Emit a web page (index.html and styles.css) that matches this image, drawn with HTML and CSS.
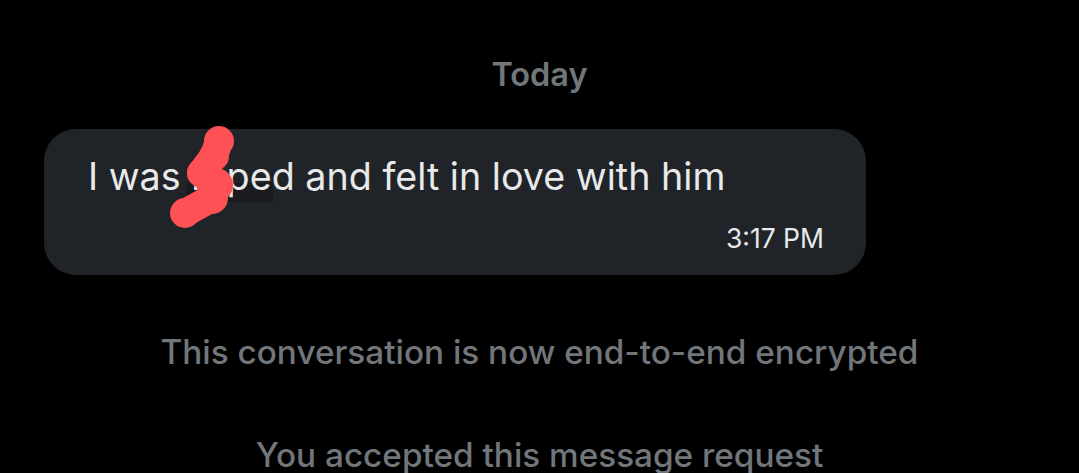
FILE: index.html
```html
<!DOCTYPE html>
<html>
<head>
<meta charset="utf-8">
<link rel="stylesheet" href="styles.css">
</head>
<body>
<main class="chat">
  <div class="day">Today</div>
  <div class="bubble">
    <div class="smudge"></div>
    <p class="msg">I was <span class="hidden">ra</span>ped and felt in love with him</p>
    <div class="time">3:17 PM</div>
    <svg class="scribble" width="80" height="120" viewBox="160 120 80 120">
      <g fill="#fd5155">
        <circle cx="219" cy="141" r="15"/>
        <circle cx="214" cy="156" r="15"/>
        <circle cx="201" cy="173" r="14"/>
        <circle cx="216" cy="185" r="17"/>
        <circle cx="212" cy="198" r="16"/>
        <circle cx="185" cy="213" r="15"/>
        <path d="M219 141 L214 156 L201 173 L216 185 L212 198 L185 213" stroke="#fd5155" stroke-width="28" stroke-linecap="round" stroke-linejoin="round" fill="none"/>
      </g>
    </svg>
  </div>
  <div class="system enc">This conversation is now end-to-end encrypted</div>
  <div class="system accepted">You accepted this message request</div>
</main>
</body>
</html>
```

FILE: styles.css
```css
html, body {
  margin: 0;
  padding: 0;
  background: #000;
  overflow: hidden;
}
body {
  width: 1079px;
  height: 473px;
  font-family: Inter, "Noto Sans", sans-serif;
}
.chat {
  display: flex;
  flex-direction: column;
}
.day {
  margin-top: 55px;
  height: 40px;
  line-height: 40px;
  text-align: center;
  color: #71767b;
  font-size: 32.5px;
  font-weight: 600;
}
.bubble {
  position: relative;
  margin-top: 34px;
  margin-left: 44px;
  width: 822px;
  height: 146px;
  box-sizing: border-box;
  padding: 23px 42px 0 44px;
  background: #202327;
  border-radius: 32px;
}
.msg {
  position: relative;
  margin: 0;
  height: 48px;
  line-height: 48px;
  color: #e7e9ea;
  font-size: 37.7px;
  font-weight: 400;
}
.hidden {
  color: #e7e9ea;
}
.time {
  margin-top: 22px;
  text-align: right;
  line-height: 32px;
  color: #e7e9ea;
  font-size: 26.5px;
}
.smudge {
  position: absolute;
  left: 143px;
  top: 54px;
  width: 86px;
  height: 19px;
  background: #191b1e;
}
.scribble {
  position: absolute;
  left: 116px;
  top: -9px;
}
.system {
  text-align: center;
  color: #71767b;
  font-size: 33.3px;
  font-weight: 500;
  line-height: 40px;
}
.enc {
  margin-top: 57px;
}
.accepted {
  margin-top: 63px;
}
```
